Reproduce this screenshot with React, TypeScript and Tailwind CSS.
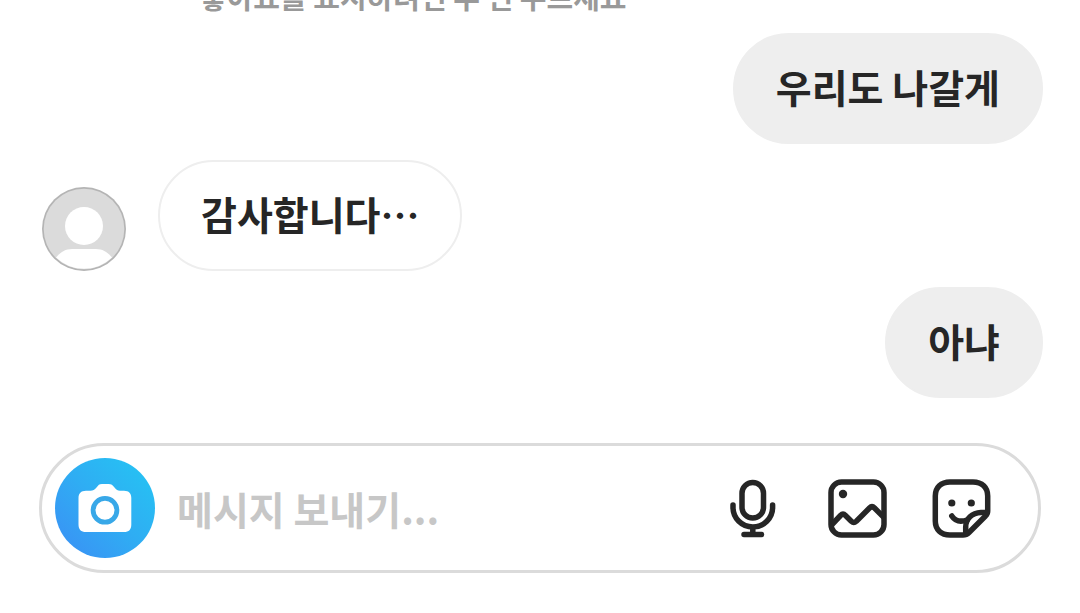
import { useState } from 'react';
import clsx from 'clsx';

interface Message {
    id: number;
    text: string;
    mine: boolean;
}

const messages: Message[] = [
    { id: 1, text: '우리도 나갈게', mine: true },
    { id: 2, text: '감사합니다⋯', mine: false },
    { id: 3, text: '아냐', mine: true },
];

// Default profile picture
function Avatar() {
    return (
        <svg viewBox="0 0 84 84" className="size-[84px] shrink-0" aria-hidden="true">
            <circle cx="42" cy="42" r="42" fill="#b4b4b4" />
            <circle cx="42" cy="42" r="40.3" fill="#dbdbdb" />
            <circle cx="42" cy="39" r="19" fill="#fff" />
            <path d="M14 70.5C18 65.5 23 62 30 62H54C61 62 66 65.500 70 70.500A40.300 40.300 0 0 1 14 70.500Z" fill="#fff" />
        </svg>
    );
}

function CameraIcon() {
    return (
        <svg viewBox="0 0 100 100" className="size-full" aria-hidden="true">
            <path
                d="M31 32.700H35.500C38 32.700 39.500 32 41.500 29.500C43.500 27 44 26 47 26H53.500C56.500 26 57.500 27 59.500 29.500C61.500 32 62.500 32.700 65 32.700H69C74 32.700 76.300 35.500 76.300 40V66.500C76.300 71.500 74 74 69 74H31C26 74 23.500 71.500 23.500 66.500V40C23.500 35.500 26 32.700 31 32.700Z"
                fill="#fff"
            />
            <circle cx="50" cy="52.300" r="11.900" fill="none" stroke="#38a8e8" strokeWidth="4.800" />
        </svg>
    );
}

function MicIcon() {
    return (
        <svg viewBox="0 0 60 60" className="size-[60px]" fill="none" stroke="currentColor" strokeWidth="5.500" strokeLinecap="round" aria-hidden="true">
            <rect x="20" y="4.500" width="21.500" height="35.500" rx="10.750" />
            <path d="M11 27V29.500A19.800 19.500 0 0 0 50.600 29.500V27M30.800 49V56M22 56.500H39.500" />
        </svg>
    );
}

function PictureIcon() {
    return (
        <svg viewBox="0 0 60 60" className="size-[60px]" fill="none" stroke="currentColor" strokeWidth="5.500" strokeLinejoin="round" aria-hidden="true">
            <rect x="4" y="4" width="53" height="53" rx="10.500" />
            <circle cx="16" cy="16" r="4.200" fill="currentColor" stroke="none" />
            <path d="M5 46.500L13.500 37.500Q16 35 18.500 37.500L24.300 43.300Q26.800 45.500 29.300 43.300L42.500 30Q45 27.500 47.500 30L57 39.500" />
        </svg>
    );
}

function StickerIcon() {
    return (
        <svg viewBox="0 0 60 60" className="size-[60px]" fill="none" stroke="currentColor" strokeWidth="5.500" strokeLinecap="round" strokeLinejoin="round" aria-hidden="true">
            <path d="M18 4H41C50 4 55.700 9.500 55.700 18V33Q55.700 36 53.500 38L37 54.500Q34.500 57 31 57H18C9 57 3.300 51.500 3.300 43V18C3.300 9.500 9 4 18 4Z" />
            <path d="M54.500 34.500H49C40 35 33.700 40.500 33.700 49V56" />
            <path d="M19.800 38C23 42.800 28.500 44.300 35 42" />
            <circle cx="19.800" cy="25" r="3.600" fill="currentColor" stroke="none" />
            <circle cx="39.300" cy="25" r="3.600" fill="currentColor" stroke="none" />
        </svg>
    );
}

function MessageRow({ text, mine }: Message) {
    return (
        <li className={clsx('flex items-end gap-8', mine && 'justify-end')}>
            {!mine && <Avatar />}
            <p
                className={clsx(
                    'rounded-full border-2 border-[#eeeeee] px-[41px] pt-[22px] pb-[26px] text-[39px] leading-[59px] font-bold',
                    mine ? 'bg-[#eeeeee]' : 'bg-white'
                )}
            >
                {text}
            </p>
        </li>
    );
}

export default function App() {
    const [draft, setDraft] = useState('');

    const actions = [
        { label: '음성 메시지', icon: <MicIcon /> },
        { label: '사진', icon: <PictureIcon /> },
        { label: '스티커', icon: <StickerIcon /> },
    ];

    return (
        <main className="overflow-hidden bg-white font-['Noto_Sans_CJK_KR',sans-serif] text-[#262626]">
            {/* Tail of the previous message, scrolled under the top edge */}
            <div className="flex h-[33px] items-end overflow-hidden pb-[21px] pl-[200px]">
                <p className="shrink-0 text-[29px] leading-8 font-bold whitespace-nowrap text-[#999999]">
                    좋아요를 표시하려면 두 번 누르세요
                </p>
            </div>

            <ul className="flex flex-col gap-4 pr-[37px] pl-[42px]">
                {messages.map((message) => (
                    <MessageRow key={message.id} {...message} />
                ))}
            </ul>

            <form
                className="mx-[39px] mt-[45px] flex items-center rounded-full border-3 border-[#dbdbdb] py-3 pr-[46px] pl-[13px]"
                onSubmit={(e) => e.preventDefault()}
            >
                <button
                    type="button"
                    aria-label="카메라"
                    className="size-[100px] shrink-0 rounded-full bg-linear-to-tr from-[#3b8df5] via-[#2fadf3] to-[#23c6f3]"
                >
                    <CameraIcon />
                </button>
                <input
                    type="text"
                    aria-label="메시지"
                    placeholder="메시지 보내기..."
                    value={draft}
                    onChange={(e) => setDraft(e.target.value)}
                    className="ml-[22px] min-w-0 flex-1 text-[39px] leading-[59px] font-bold outline-none placeholder:text-[#c7c7c7]"
                />
                <div className="flex shrink-0 gap-[45px]">
                    {actions.map((action) => (
                        <button key={action.label} type="button" aria-label={action.label}>
                            {action.icon}
                        </button>
                    ))}
                </div>
            </form>
        </main>
    );
}
